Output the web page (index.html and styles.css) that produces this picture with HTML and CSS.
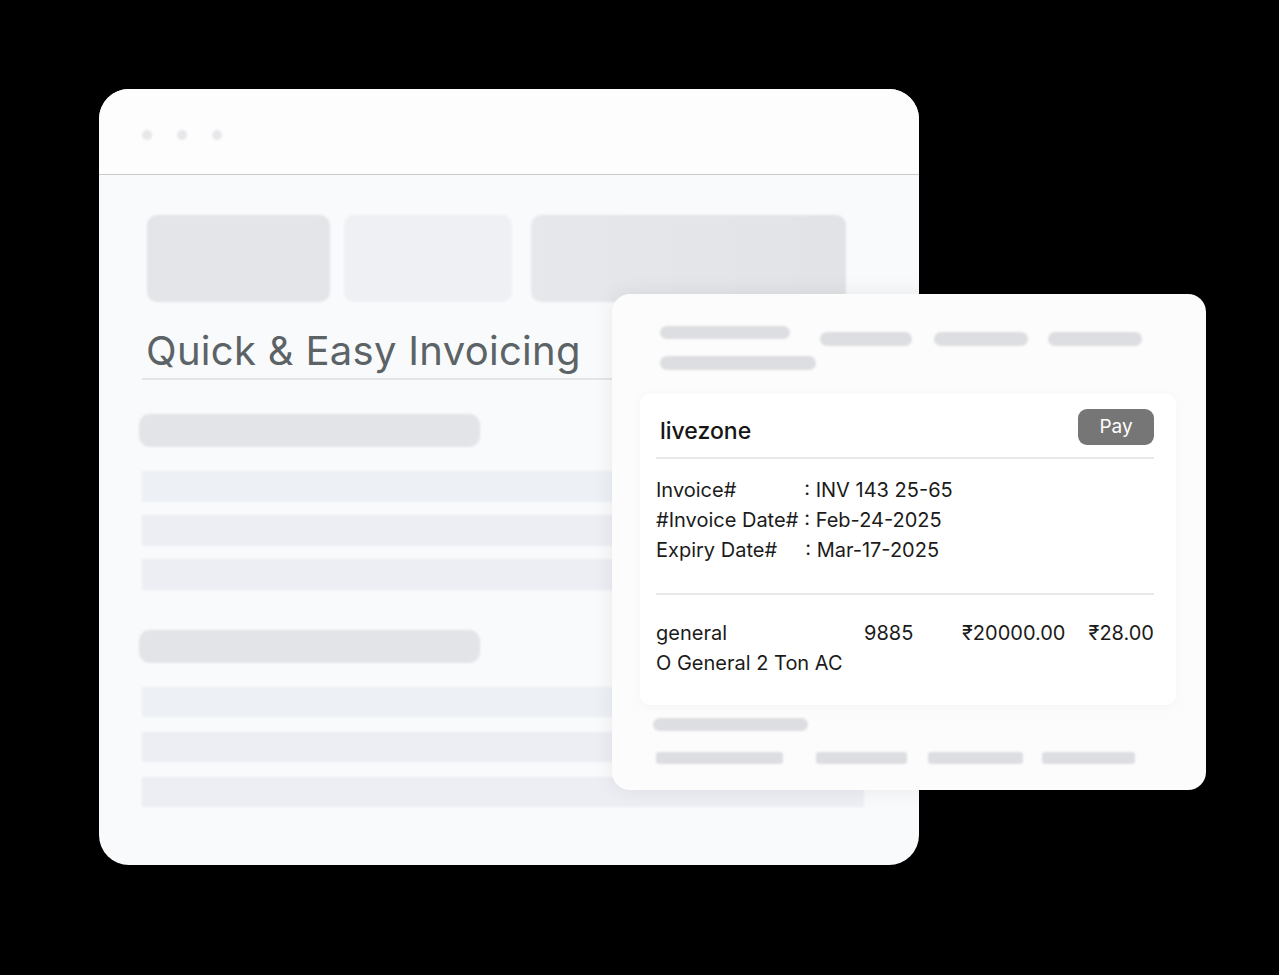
FILE: index.html
```html
<!DOCTYPE html>
<html lang="en">
<head>
<meta charset="utf-8">
<title>Quick &amp; Easy Invoicing</title>
<link rel="stylesheet" href="styles.css">
</head>
<body>
<div class="stage">
  <div class="window">
    <div class="titlebar">
      <span class="dot"></span><span class="dot"></span><span class="dot"></span>
    </div>
    <div class="content">
      <div class="blocks">
        <div class="block b1"></div>
        <div class="block b2"></div>
        <div class="block b3"></div>
      </div>
      <h1 class="title">Quick &amp; Easy Invoicing</h1>
      <div class="bar bar-first"></div>
      <div class="rows rows-a">
        <div class="row"></div>
        <div class="row"></div>
        <div class="row"></div>
      </div>
      <div class="bar bar-second"></div>
      <div class="rows rows-b">
        <div class="row"></div>
        <div class="row"></div>
        <div class="row"></div>
      </div>
    </div>
  </div>

  <div class="invoice">
    <div class="inv-skel-top">
      <div class="skel-row">
        <div class="sk sk-a"></div>
        <div class="sk sk-b"></div>
        <div class="sk sk-c"></div>
        <div class="sk sk-d"></div>
      </div>
      <div class="sk sk-e"></div>
    </div>
    <div class="inv-card">
      <div class="inv-head">
        <span class="company">livezone</span>
        <span class="pay">Pay</span>
      </div>
      <div class="divider"></div>
      <div class="info">
        <span class="lbl">Invoice#</span><span class="val">: INV 143 25-65</span>
        <span class="lbl">#Invoice Date#</span><span class="val">: Feb-24-2025</span>
        <span class="lbl">Expiry Date#</span><span class="val val-x">: Mar-17-2025</span>
      </div>
      <div class="divider divider-2"></div>
      <div class="items">
        <span>general</span><span>9885</span><span>₹20000.00</span><span class="right">₹28.00</span>
        <span class="desc">O General 2 Ton AC</span>
      </div>
    </div>
    <div class="inv-skel-bottom">
      <div class="sk sk-f"></div>
      <div class="skel-row skel-row-b">
        <div class="sk sk-g"></div>
        <div class="sk sk-h"></div>
        <div class="sk sk-i"></div>
        <div class="sk sk-j"></div>
      </div>
    </div>
  </div>
</div>
</body>
</html>
```

FILE: styles.css
```css
html, body {
  margin: 0;
  padding: 0;
  background: #000;
}

.stage {
  position: relative;
  width: 1279px;
  height: 975px;
  padding: 89px 0 0 99px;
  box-sizing: border-box;
  font-family: Inter, "Noto Sans", "DejaVu Sans", sans-serif;
}

/* ---------- browser window ---------- */
.window {
  width: 820px;
  height: 776px;
  border-radius: 30px;
  background: #f9fafc;
  overflow: hidden;
}

.titlebar {
  height: 86px;
  box-sizing: border-box;
  padding: 6px 0 0 43px;
  display: flex;
  align-items: center;
  gap: 25px;
  background: #fdfdfe;
  border-bottom: 1px solid #c9cacd;
}

.dot {
  width: 10px;
  height: 10px;
  border-radius: 50%;
  background: #e6e7e9;
  filter: blur(0.8px);
}

.content {
  padding: 40px 0 0 42px;
}

.blocks {
  display: flex;
  margin-left: 6px;
  height: 87px;
}

.block {
  height: 87px;
  border-radius: 10px;
  filter: blur(1px);
}

.b1 { width: 183px; background: #e4e5e8; }
.b2 { width: 168px; margin-left: 14px; background: #eef0f3; }
.b3 { width: 315px; margin-left: 19px; background: linear-gradient(90deg, #e7e8eb, #e2e3e6); }

.title {
  margin: 25px 0 0 1px;
  width: 721px;
  padding: 0 0 3px 4px;
  box-sizing: border-box;
  font-size: 40px;
  line-height: 48px;
  font-weight: 400;
  color: #5c6366;
  border-bottom: 2px solid #e4e5e8;
  letter-spacing: 0.3px;
}

.bar {
  width: 341px;
  height: 33px;
  margin-left: -2px;
  border-radius: 11px;
  background: #e3e4e7;
  filter: blur(1.2px);
}

.bar-first { margin-top: 34px; }
.bar-second { margin-top: 40px; }

.rows {
  display: flex;
  flex-direction: column;
  margin-left: 1px;
  width: 722px;
}

.rows-a { margin-top: 24px; gap: 13px; }
.rows-a .row { height: 31px; }
.rows-b { margin-top: 24px; gap: 15px; }
.rows-b .row { height: 30px; }

.row {
  background: #eceef3;
  filter: blur(1px);
}

.rows .row:first-child { background: #edf0f4; }

/* ---------- invoice card ---------- */
.invoice {
  position: absolute;
  left: 612px;
  top: 294px;
  width: 594px;
  height: 496px;
  box-sizing: border-box;
  border-radius: 18px;
  background: #fcfcfd;
  box-shadow: 0 0 22px rgba(0, 0, 0, 0.07);
  padding: 32px 30px 0 28px;
  color: #1b1b1b;
}

.sk {
  background: #dddee1;
  border-radius: 7px;
  filter: blur(1.3px);
}

.inv-skel-top {
  margin-left: 20px;
}

.skel-row {
  display: flex;
  align-items: flex-start;
}

.sk-a { width: 130px; height: 13px; }
.sk-b { width: 92px; height: 14px; margin: 6px 0 0 30px; }
.sk-c { width: 94px; height: 14px; margin: 6px 0 0 22px; }
.sk-d { width: 94px; height: 14px; margin: 6px 0 0 20px; }
.sk-e { width: 156px; height: 14px; margin-top: 10px; }

.inv-card {
  margin-top: 24px;
  width: 536px;
  box-sizing: border-box;
  background: #fff;
  border-radius: 10px;
  box-shadow: 0 2px 12px rgba(0, 0, 0, 0.035);
  padding: 15px 22px 27px 16px;
}

.inv-head {
  display: flex;
  justify-content: space-between;
  align-items: flex-start;
}

.company {
  margin: 8px 0 0 4px;
  font-size: 23px;
  line-height: 28px;
  font-weight: 500;
  color: #151515;
}

.pay {
  width: 76px;
  height: 36px;
  border-radius: 9px;
  background: #767676;
  color: #fff;
  font-size: 19px;
  line-height: 36px;
  text-align: center;
}

.divider {
  margin-top: 12px;
  height: 2px;
  background: #e7e8ea;
}

.divider-2 { margin-top: 28px; }

.info {
  margin-top: 16px;
  display: grid;
  grid-template-columns: max-content 1fr;
  column-gap: 6px;
  font-size: 20px;
  line-height: 30px;
}

.val-x { padding-left: 1px; }

.items {
  margin-top: 23px;
  display: grid;
  grid-template-columns: 208px 98px 126px 1fr;
  font-size: 20px;
  line-height: 30px;
}

.items .right { text-align: right; }
.items .desc { grid-column: 1 / -1; }

.inv-skel-bottom {
  margin: 13px 0 0 13px;
}

.sk-f { width: 155px; height: 13px; }
.skel-row-b { margin-top: 21px; margin-left: 3px; }
.sk-g { width: 127px; height: 12px; border-radius: 3px; }
.sk-h { width: 91px; height: 12px; margin-left: 33px; border-radius: 3px; }
.sk-i { width: 95px; height: 12px; margin-left: 21px; border-radius: 3px; }
.sk-j { width: 93px; height: 12px; margin-left: 19px; border-radius: 3px; }
```
